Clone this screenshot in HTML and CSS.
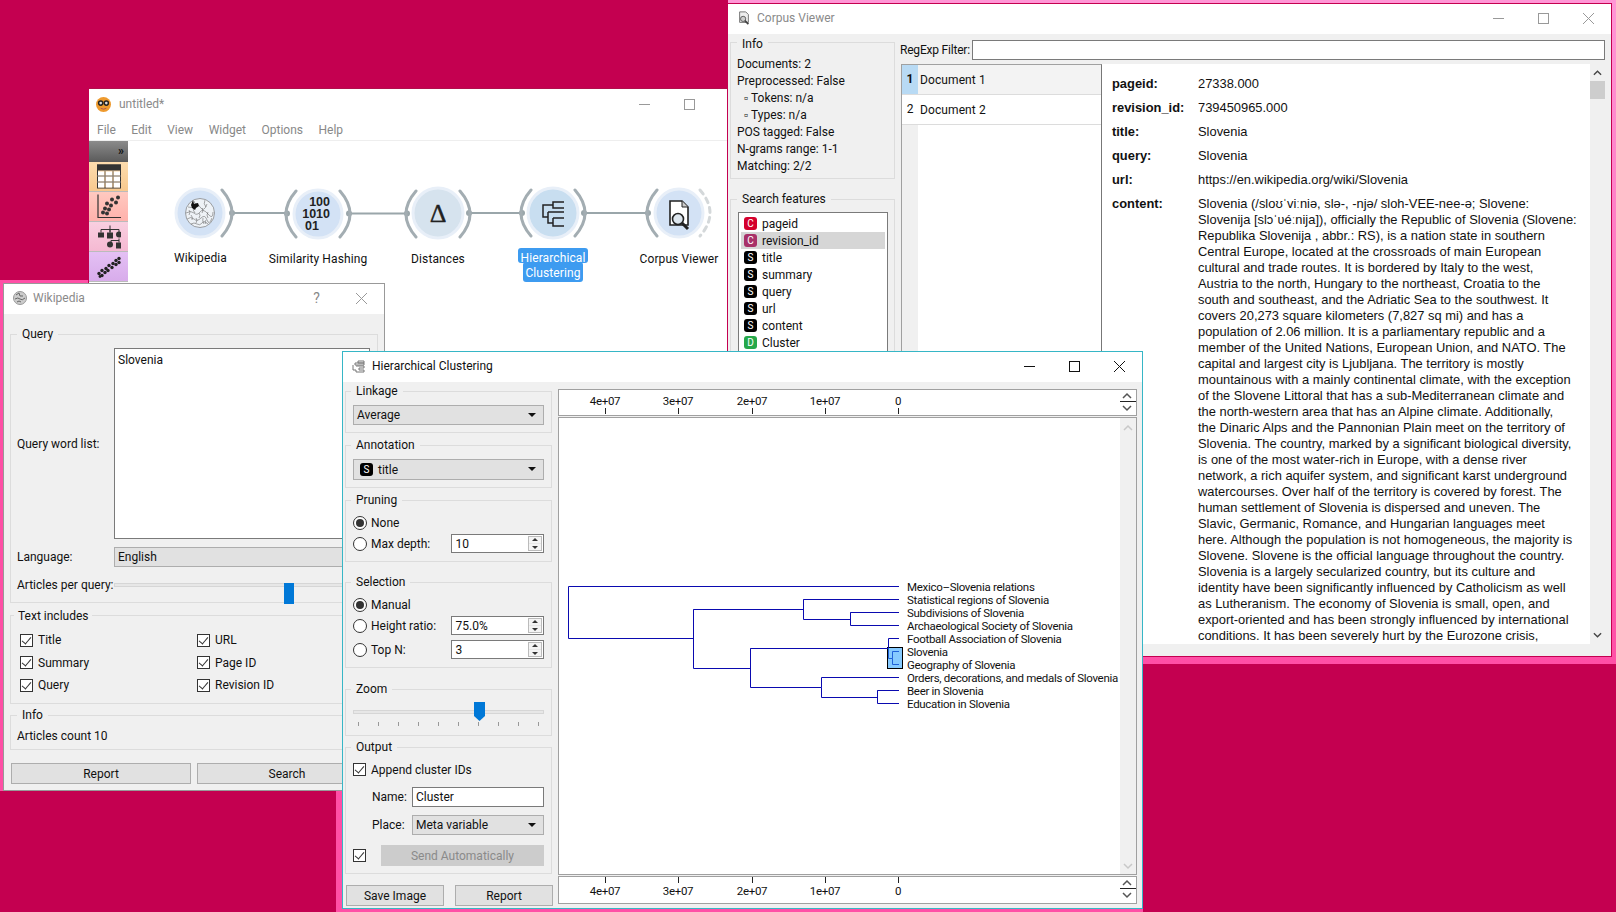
FILE: index.html
```html
<!DOCTYPE html>
<html lang="en">
<head>
    <meta charset="UTF-8">
    <title>Orange - Hierarchical Clustering</title>
    <link rel="stylesheet" href="styles.css">
</head>
<body>
<div id="desktop">
    <div class="glow glow-corpus"></div>
    <div class="glow glow-wiki"></div>
    <div class="glow glow-hc"></div>

    <!-- canvas window -->
    <div class="window win-canvas">
        <div class="titlebar inactive">
            <svg class="tb-logo" viewBox="0 0 16 16"><circle cx="8" cy="8" r="8" fill="#ee9a2e"/><circle cx="5" cy="6.5" r="3" fill="#222"/><circle cx="11" cy="6.5" r="3" fill="#222"/><circle cx="5" cy="6.5" r="1.4" fill="#ddd"/><circle cx="11" cy="6.5" r="1.4" fill="#ddd"/><path d="M5 12q3 2 6 0" stroke="#a55" fill="none"/></svg>
            <span class="title-text">untitled*</span>
            <div class="tb-controls">
                <span class="tb-btn"><svg viewBox="0 0 11 11"><path d="M0 5.5h11"/></svg></span>
                <span class="tb-btn"><svg viewBox="0 0 11 11"><rect x=".5" y=".5" width="10" height="10"/></svg></span>
                <span class="tb-btn"><svg viewBox="0 0 11 11"><path d="M0 0l11 11M11 0L0 11"/></svg></span>
            </div>
        </div>
        <div class="menubar"><span>File</span><span>Edit</span><span>View</span><span>Widget</span><span>Options</span><span>Help</span></div>
        <div class="canvas-body">
            <div class="dock">
                <div class="dock-head">»</div>
                <div class="tile tile-data">
                    <svg viewBox="0 0 24 24"><rect x="0" y="0" width="24" height="6" fill="#333"/><rect x=".5" y=".5" width="23" height="23" fill="none" stroke="#333"/><path d="M1 7h6v4H1zM9 7h6v4H9zM17 7h6v4h-6zM1 12h6v5H1zM9 12h6v5H9zM17 12h6v5h-6zM1 18h6v5H1zM9 18h6v5H9zM17 18h6v5h-6z" fill="#fff"/><path d="M0 11.500h24M0 17.500h24M8 6v18M16 6v18" stroke="#777" fill="none"/></svg>
                </div>
                <div class="tile tile-vis">
                    <svg viewBox="0 0 24 24"><path d="M1 0v23h23" fill="none" stroke="#333" stroke-width="1.2"/><g fill="#333"><circle cx="21" cy="3" r="2"/><circle cx="15" cy="5" r="2"/><circle cx="19" cy="8" r="2"/><circle cx="10" cy="9" r="2"/><circle cx="14" cy="11" r="2"/><circle cx="8" cy="14" r="2"/><circle cx="12" cy="15" r="2"/><circle cx="6" cy="18" r="2"/><circle cx="10" cy="19" r="2"/></g></svg>
                </div>
                <div class="tile tile-model">
                    <svg viewBox="0 0 24 24"><path d="M13 1v7M4 5h18M4 5v3M13 5v3M22 5v3M22 14v4M14 16h8M14 16v2" stroke="#333" fill="none"/><rect x="1" y="8" width="6" height="5" fill="#333"/><rect x="10" y="8" width="6" height="6" fill="#333"/><circle cx="22" cy="10" r="3" fill="#333"/><circle cx="13" cy="20" r="3" fill="#333"/><rect x="19" y="18" width="5" height="6" fill="#333"/></svg>
                </div>
                <div class="tile tile-unsup">
                    <svg viewBox="0 0 24 24"><g fill="#222"><circle cx="2" cy="19" r="1.7"/><circle cx="5" cy="21" r="1.7"/><circle cx="5" cy="16" r="1.7"/><circle cx="8" cy="18" r="1.7"/><circle cx="9" cy="14" r="1.7"/><circle cx="11" cy="16" r="1.7"/><circle cx="12" cy="11" r="1.7"/><circle cx="15" cy="13" r="1.7"/><circle cx="16" cy="9" r="1.7"/><circle cx="19" cy="10" r="1.7"/><circle cx="19" cy="6" r="1.7"/><circle cx="22" cy="4" r="1.7"/><circle cx="22" cy="8" r="1.7"/><circle cx="3" cy="22" r="1.4"/></g></svg>
                </div>
            </div>
            <svg class="scheme" viewBox="127 141 630 150">
                <path class="link" d="M231 213H286M348 213.5H406M468 213H521M583 213H647"/>
                <g class="anchors"><circle cx="231" cy="213" r="3"/><circle cx="286" cy="213.5" r="3"/><circle cx="348" cy="213.5" r="3"/><circle cx="406" cy="213.5" r="3"/><circle cx="468" cy="213" r="3"/><circle cx="521" cy="213" r="3"/><circle cx="583" cy="213" r="3"/><circle cx="647" cy="213" r="3"/></g>
                <path class="arc" d="M221 190Q241 213 221 236M295 191Q275 214 295 237M339 191Q359 214 339 237M415 191Q395 214 415 237M459 191Q479 214 459 237M530 190Q510 213 530 236M574 190Q594 213 574 236M656 190Q636 213 656 236"/>
                <path class="arc arc-dash" d="M699 190Q719 213 699 236"/>
                <circle class="node" cx="199" cy="213" r="24"/>
                <circle class="node" cx="317" cy="214" r="24"/>
                <circle class="node node-grey" cx="437" cy="213" r="25"/>
                <circle class="node node-sel" cx="552" cy="213" r="25"/>
                <circle class="node" cx="678" cy="213" r="24"/>

                <!-- wikipedia globe -->
                <circle cx="199" cy="213" r="14.5" fill="#eef2f6" stroke="#666" stroke-width=".6"/>
                <path d="M187 207q4 2 6-2t6 2 7-3M185 213q5-3 8 0t6-1 8 2 5-2M186 219q4-3 7 0t7-1 6 2 5-2M190 224q3-2 6 0t5-1 6 1M193 201q2 3 0 5M204 200q-2 4 1 7M193 207q-2 3 1 6M201 208q2 3 0 5M207 212q-2 3 0 6M195 218q2 2 0 5M202 218q-1 3 1 6M188 210q2 2 0 5M190 215q2 2 1 5M198 213q2 2 0 5M205 220q-2 2 0 4" fill="none" stroke="#555" stroke-width=".5"/>
                <path d="M190 205l2-5 1 4 4-1 1 3-3 2-1 2-3-2z" fill="#111"/>

                <!-- hashing -->
                <text class="bits" x="329" y="206" text-anchor="end">100</text>
                <text class="bits" x="329" y="218" text-anchor="end">1010</text>
                <text class="bits" x="318" y="230" text-anchor="end">01</text>

                <text class="delta" x="437" y="222" text-anchor="middle">Δ</text>

                <!-- clustering tree -->
                <path d="M563 202H552V208H563M552 205H542V217H547M547 212V223H552M547 212H563M552 218V226H563M552 218H563" fill="none" stroke="#222" stroke-width="1.5"/>

                <!-- corpus doc with lens -->
                <path d="M669 201h12l6 6v18h-18z" fill="#fff" stroke="#222" stroke-width="1.6"/>
                <path d="M681 201v6h6" fill="#ccc" stroke="#222"/>
                <circle cx="677" cy="219" r="5.5" fill="#dde6ee" stroke="#222" stroke-width="1.6"/>
                <path d="M681 223l6 6" stroke="#222" stroke-width="3"/>

                <text class="node-label" x="199.5" y="262" text-anchor="middle">Wikipedia</text>
                <text class="node-label" x="317" y="263" text-anchor="middle">Similarity Hashing</text>
                <text class="node-label" x="437" y="263" text-anchor="middle">Distances</text>
                <rect x="517" y="248" width="70" height="15" rx="3" fill="#3d9bf0"/>
                <rect x="522" y="262" width="60" height="20" rx="3" fill="#3d9bf0"/>
                <text class="node-label sel" x="552" y="262" text-anchor="middle">Hierarchical</text>
                <text class="node-label sel" x="552" y="277" text-anchor="middle">Clustering</text>
                <text class="node-label" x="678" y="263" text-anchor="middle">Corpus Viewer</text>
            </svg>
        </div>
    </div>

    <!-- corpus viewer -->
    <div class="window win-corpus">
        <div class="titlebar inactive">
            <svg class="tb-icon" viewBox="0 0 14 16"><path d="M2 1h7l3 3v9H2z" fill="#eee" stroke="#666"/><circle cx="6" cy="9" r="3" fill="#ccc" stroke="#555"/><path d="M8 11l4 4" stroke="#444" stroke-width="2"/></svg>
            <span class="title-text">Corpus Viewer</span>
            <div class="tb-controls">
                <span class="tb-btn"><svg viewBox="0 0 11 11"><path d="M0 5.5h11"/></svg></span>
                <span class="tb-btn"><svg viewBox="0 0 11 11"><rect x=".5" y=".5" width="10" height="10"/></svg></span>
                <span class="tb-btn"><svg viewBox="0 0 11 11"><path d="M0 0l11 11M11 0L0 11"/></svg></span>
            </div>
        </div>
        <div class="corpus-body">
            <div class="corpus-side">
                <div class="group corpus-info">
                    <div class="legend">Info</div>
                    <div class="info-lines">
                        <div>Documents: 2</div>
                        <div>Preprocessed: False</div>
                        <div class="indent">▫ Tokens: n/a</div>
                        <div class="indent">▫ Types: n/a</div>
                        <div>POS tagged: False</div>
                        <div>N-grams range: 1-1</div>
                        <div>Matching: 2/2</div>
                    </div>
                </div>
                <div class="group corpus-search">
                    <div class="legend">Search features</div>
                    <ul class="feature-list">
                        <li><span class="badge badge-c">C</span>pageid</li>
                        <li class="picked"><span class="badge badge-cm">C</span>revision_id</li>
                        <li><span class="badge">S</span>title</li>
                        <li><span class="badge">S</span>summary</li>
                        <li><span class="badge">S</span>query</li>
                        <li><span class="badge">S</span>url</li>
                        <li><span class="badge">S</span>content</li>
                        <li><span class="badge badge-d">D</span>Cluster</li>
                    </ul>
                </div>
            </div>
            <div class="corpus-main">
                <div class="filter-row">
                    <span class="filter-label">RegExp Filter:</span>
                    <div class="line-input filter-input"></div>
                </div>
                <div class="corpus-split">
                    <div class="doc-table">
                        <div class="doc-row current"><span class="doc-num">1</span><span class="doc-name">Document 1</span></div>
                        <div class="doc-row"><span class="doc-num">2</span><span class="doc-name">Document 2</span></div>
                        <div class="doc-rest"></div>
                    </div>
                    <div class="doc-view">
                        <div class="doc-text">
                            <b>pageid:</b><span>27338.000</span>
                            <b>revision_id:</b><span>739450965.000</span>
                            <b>title:</b><span>Slovenia</span>
                            <b>query:</b><span>Slovenia</span>
                            <b>url:</b><span>https://en.wikipedia.org/wiki/Slovenia</span>
                            <b>content:</b><span class="doc-content">Slovenia (/sloʊˈviːniə, slə-, -njə/ sloh-VEE-nee-ə; Slovene:
Slovenija [slɔˈʋéːnija]), officially the Republic of Slovenia (Slovene:
Republika Slovenija , abbr.: RS), is a nation state in southern
Central Europe, located at the crossroads of main European
cultural and trade routes. It is bordered by Italy to the west,
Austria to the north, Hungary to the northeast, Croatia to the
south and southeast, and the Adriatic Sea to the southwest. It
covers 20,273 square kilometers (7,827 sq mi) and has a
population of 2.06 million. It is a parliamentary republic and a
member of the United Nations, European Union, and NATO. The
capital and largest city is Ljubljana. The territory is mostly
mountainous with a mainly continental climate, with the exception
of the Slovene Littoral that has a sub-Mediterranean climate and
the north-western area that has an Alpine climate. Additionally,
the Dinaric Alps and the Pannonian Plain meet on the territory of
Slovenia. The country, marked by a significant biological diversity,
is one of the most water-rich in Europe, with a dense river
network, a rich aquifer system, and significant karst underground
watercourses. Over half of the territory is covered by forest. The
human settlement of Slovenia is dispersed and uneven. The
Slavic, Germanic, Romance, and Hungarian languages meet
here. Although the population is not homogeneous, the majority is
Slovene. Slovene is the official language throughout the country.
Slovenia is a largely secularized country, but its culture and
identity have been significantly influenced by Catholicism as well
as Lutheranism. The economy of Slovenia is small, open, and
export-oriented and has been strongly influenced by international
conditions. It has been severely hurt by the Eurozone crisis,</span>
                        </div>
                        <div class="scrollbar">
                            <svg class="chev" viewBox="0 0 10 6"><path d="M1 5l4-4 4 4"/></svg>
                            <div class="thumb"></div>
                            <svg class="chev chev-end" viewBox="0 0 10 6"><path d="M1 1l4 4 4-4"/></svg>
                        </div>
                    </div>
                </div>
            </div>
        </div>
    </div>

    <!-- wikipedia widget -->
    <div class="window win-wiki">
        <div class="titlebar inactive">
            <svg class="tb-icon" viewBox="0 0 14 14"><circle cx="7" cy="7" r="6.5" fill="#ccc" stroke="#999"/><path d="M3 4l3-2 1 3 3 0M2 8q3-2 5 0t5-1M4 11q2-2 4 0" fill="none" stroke="#666"/></svg>
            <span class="title-text">Wikipedia</span>
            <div class="tb-controls">
                <span class="tb-btn tb-help">?</span>
                <span class="tb-btn"><svg viewBox="0 0 11 11"><path d="M0 0l11 11M11 0L0 11"/></svg></span>
            </div>
        </div>
        <div class="wiki-body">
            <div class="group wiki-query">
                <div class="legend">Query</div>
                <div class="query-grid">
                    <label>Query word list:</label>
                    <div class="text-area">Slovenia</div>
                    <label>Language:</label>
                    <div class="combo combo-plain">English</div>
                    <label>Articles per query:</label>
                    <div class="slider"><div class="track"></div><div class="wiki-handle"></div></div>
                </div>
            </div>
            <div class="group wiki-includes">
                <div class="legend legend-flush">Text includes</div>
                <div class="check-grid">
                    <div class="check-row"><span class="check"></span>Title</div>
                    <div class="check-row"><span class="check"></span>URL</div>
                    <div class="check-row"><span class="check"></span>Summary</div>
                    <div class="check-row"><span class="check"></span>Page ID</div>
                    <div class="check-row"><span class="check"></span>Query</div>
                    <div class="check-row"><span class="check"></span>Revision ID</div>
                </div>
            </div>
            <div class="group wiki-info">
                <div class="legend">Info</div>
                <div class="info-count">Articles count 10</div>
            </div>
            <div class="button-row wiki-buttons">
                <div class="button">Report</div>
                <div class="button">Search</div>
            </div>
        </div>
    </div>

    <!-- hierarchical clustering widget -->
    <div class="window win-hc">
        <div class="titlebar">
            <svg class="tb-icon" viewBox="0 0 14 14"><path d="M6 2h6v2H6zM3 4h9v2H3zM1 6v5h3v2h8v-2H7V9h5V7H4" fill="none" stroke="#777"/></svg>
            <span class="title-text">Hierarchical Clustering</span>
            <div class="tb-controls">
                <span class="tb-btn"><svg viewBox="0 0 11 11"><path d="M0 5.5h11"/></svg></span>
                <span class="tb-btn"><svg viewBox="0 0 11 11"><rect x=".5" y=".5" width="10" height="10"/></svg></span>
                <span class="tb-btn"><svg viewBox="0 0 11 11"><path d="M0 0l11 11M11 0L0 11"/></svg></span>
            </div>
        </div>
        <div class="hc-body">
            <div class="hc-side">
                <div class="group g-linkage">
                    <div class="legend">Linkage</div>
                    <div class="combo">Average</div>
                </div>
                <div class="group g-annotation">
                    <div class="legend">Annotation</div>
                    <div class="combo combo-tall"><span class="badge">S</span>title</div>
                </div>
                <div class="group g-pruning">
                    <div class="legend">Pruning</div>
                    <div class="radio-row r-first"><span class="radio on"></span>None</div>
                    <div class="radio-row"><span class="radio"></span><span class="radio-label">Max depth:</span><div class="spin">10<span class="spin-btns"></span></div></div>
                </div>
                <div class="group g-selection">
                    <div class="legend">Selection</div>
                    <div class="radio-row r-first"><span class="radio on"></span>Manual</div>
                    <div class="radio-row"><span class="radio"></span><span class="radio-label">Height ratio:</span><div class="spin">75.0%<span class="spin-btns"></span></div></div>
                    <div class="radio-row r-next"><span class="radio"></span><span class="radio-label">Top N:</span><div class="spin">3<span class="spin-btns"></span></div></div>
                </div>
                <div class="group g-zoom">
                    <div class="legend">Zoom</div>
                    <div class="slider zoom-slider">
                        <div class="track"></div>
                        <svg class="zoom-handle" viewBox="0 0 11 19"><path d="M0 0h11v14l-5.5 5L0 14z"/></svg>
                    </div>
                    <div class="ticks"><i></i><i></i><i></i><i></i><i></i><i></i><i></i><i></i><i></i><i></i></div>
                </div>
                <div class="group g-output">
                    <div class="legend">Output</div>
                    <div class="check-row append-row"><span class="check"></span>Append cluster IDs</div>
                    <div class="form-row">
                        <label>Name:</label>
                        <div class="line-input">Cluster</div>
                    </div>
                    <div class="form-row">
                        <label>Place:</label>
                        <div class="combo">Meta variable</div>
                    </div>
                    <div class="send-row">
                        <span class="check"></span>
                        <div class="button disabled">Send Automatically</div>
                    </div>
                </div>
                <div class="button-row hc-buttons">
                    <div class="button">Save Image</div>
                    <div class="button">Report</div>
                </div>
            </div>
            <div class="hc-main">
                <svg class="axis" viewBox="559 390 577 25">
                    <g class="tick-text" text-anchor="middle"><text x="605" y="405">4e+07</text><text x="678" y="405">3e+07</text><text x="752" y="405">2e+07</text><text x="825" y="405">1e+07</text><text x="898" y="405">0</text></g>
                    <path class="tick" d="M605.500 408v6M678.500 408v6M752.500 408v6M825.500 408v6M898.500 408v6"/>
                    <path class="chev-line" d="M1123 398l4-4 4 4M1123 406l4 4 4-4"/>
                    <path class="tick" d="M1120 401.500h16"/>
                </svg>
                <svg class="plot" viewBox="559 418 577 456">
                    <rect x="1120" y="416" width="17" height="458" fill="#f0f0f0"/>
                    <path class="chev-dim" d="M1124 430l4-4 4 4M1124 864l4 4 4-4"/>
                    <rect x="887.500" y="647.500" width="15" height="21" fill="#86caff" stroke="#000"/>
                    <path class="tree" d="M899 586.500H568.500V638.500H693.500V609.500V668.500H750.500V648.500V687.500H821.500V677.500H899M693.500 609.500H803.500V599.500H899M803.500 599.500V619.500H850.500V612.500H899M850.500 612.500V625.500H899M750.500 648.500H888.500V638.500H899M821.500 687.500V697.500H877.500V690.500H899M877.500 690.500V703.500H899"/>
                    <path class="tree tree-sel" d="M888.500 648V658.500H892.500V651.500H899M892.500 658.500V664.500H899"/>
                    <g class="leaf">
                        <text x="907" y="591">Mexico–Slovenia relations</text>
                        <text x="907" y="604">Statistical regions of Slovenia</text>
                        <text x="907" y="617">Subdivisions of Slovenia</text>
                        <text x="907" y="630">Archaeological Society of Slovenia</text>
                        <text x="907" y="643">Football Association of Slovenia</text>
                        <text x="907" y="656">Slovenia</text>
                        <text x="907" y="669">Geography of Slovenia</text>
                        <text x="907" y="682">Orders, decorations, and medals of Slovenia</text>
                        <text x="907" y="695">Beer in Slovenia</text>
                        <text x="907" y="708">Education in Slovenia</text>
                    </g>
                </svg>
                <svg class="axis axis-bottom" viewBox="559 877 577 26">
                    <g class="tick-text" text-anchor="middle"><text x="605" y="895">4e+07</text><text x="678" y="895">3e+07</text><text x="752" y="895">2e+07</text><text x="825" y="895">1e+07</text><text x="898" y="895">0</text></g>
                    <path class="tick" d="M605.500 877v6M678.500 877v6M752.500 877v6M825.500 877v6M898.500 877v6"/>
                    <path class="chev-line" d="M1123 885l4-4 4 4M1123 893l4 4 4-4"/>
                    <path class="tick" d="M1120 888.500h16"/>
                </svg>
            </div>
        </div>
    </div>
</div>
</body>
</html>
```

FILE: styles.css
```css
* {
    box-sizing: border-box;
}

body {
    margin: 0;
    font-family: Roboto, "Noto Sans", sans-serif;
    font-size: 12px;
    color: #111;
}

#desktop {
    position: relative;
    width: 1616px;
    height: 912px;
    overflow: hidden;
    background-color: #c40050;
}

/* pink shadows that the windows leave on the desktop */
.glow {
    position: absolute;
    background-color: #ff4fa6;
}

.glow-corpus {
    left: 728px;
    top: 0;
    width: 888px;
    height: 664px;
    background: linear-gradient(#ff96d6, #ff4fa6);
}

.glow-wiki {
    left: 0;
    top: 280px;
    width: 100px;
    height: 511px;
}

.glow-hc {
    left: 336px;
    top: 700px;
    width: 807px;
    height: 212px;
}

/* windows sit free on the desktop */
.window {
    position: absolute;
    display: flex;
    flex-direction: column;
    background-color: #f0f0f0;
    border: 1px solid #999;
    overflow: hidden;
}

.win-canvas {
    left: 88px;
    top: 88px;
    width: 669px;
    height: 300px;
    background-color: #fff;
    border-color: #c40050;
    border-top-color: #b0104c;
    border-right: none;
}

.win-corpus {
    left: 727px;
    top: 3px;
    width: 885px;
    height: 654px;
    border-color: #c40050;
}

.win-wiki {
    left: 3px;
    top: 283px;
    width: 382px;
    height: 508px;
}

.win-hc {
    left: 342px;
    top: 351px;
    width: 801px;
    height: 558px;
    border-color: #36b6c6;
}

.titlebar {
    display: flex;
    align-items: center;
    height: 30px;
    flex: none;
    padding: 0 0 2px 9px;
    background-color: #fff;
}

.titlebar .title-text {
    margin-left: 6px;
}

.titlebar.inactive .title-text {
    color: #8a8a8a;
}

.win-canvas .titlebar {
    height: 29px;
    padding: 1px 0 0 7px;
}

.win-canvas .title-text {
    margin-left: 8px;
}

.tb-logo {
    width: 15px;
    height: 15px;
}

.tb-icon {
    width: 14px;
    height: 14px;
}

.tb-controls {
    display: flex;
    margin-left: auto;
}

.tb-btn {
    display: flex;
    align-items: center;
    justify-content: center;
    width: 45px;
    height: 28px;
    font-size: 14px;
}

.tb-btn svg {
    width: 11px;
    height: 11px;
    fill: none;
    stroke: #111;
}

.inactive .tb-btn svg {
    stroke: #999;
}

.tb-help {
    color: #888;
}

.menubar {
    display: flex;
    gap: 15.5px;
    height: 23px;
    padding: 5px 8px 0;
    flex: none;
    color: #888;
    border-bottom: 1px solid #eee;
}

.canvas-body {
    display: flex;
    flex: 1;
    min-height: 0;
}

.dock {
    width: 39px;
    flex: none;
}

.dock-head {
    height: 21px;
    padding-right: 4px;
    text-align: right;
    font-weight: bold;
    line-height: 20px;
    background: linear-gradient(#8b8b8b, #5a5a5a);
}

.tile {
    display: flex;
    align-items: center;
    justify-content: center;
    height: 30px;
    border-bottom: 1px solid #bbb;
}

.tile svg {
    width: 24px;
    height: 25px;
}

.tile-data {
    background: linear-gradient(#fcdcae, #f8c98e);
}

.tile-vis {
    background: linear-gradient(#ffc9c0, #ffb2ac);
}

.tile-model {
    background: linear-gradient(#f9cfe0, #f5b9d2);
}

.tile-unsup {
    background: linear-gradient(#e4c0f4, #d8aceb);
}

/* scheme */
.scheme {
    width: 630px;
    height: 150px;
    flex: none;
}

.link {
    fill: none;
    stroke: #9aa6aa;
    stroke-width: 2;
}

.anchors {
    fill: #9aa6aa;
}

.arc {
    fill: none;
    stroke: #a3adb2;
    stroke-width: 3;
    stroke-linecap: round;
}

.arc-dash {
    stroke: #d4d8da;
    stroke-dasharray: 5 5;
}

.node {
    fill: #d3e2f5;
    stroke: #e8eff8;
    stroke-width: 3;
}

.node-grey {
    fill: #d6e3ee;
}

.node-sel {
    fill: #c8def0;
}

.bits {
    font-family: "Liberation Sans", sans-serif;
    font-size: 12.5px;
    font-weight: bold;
    fill: #222;
}

.delta {
    font-family: "Liberation Serif", serif;
    font-size: 26px;
    fill: #222;
    stroke: #222;
    stroke-width: .3;
}

.node-label {
    font-family: Roboto, sans-serif;
    font-size: 12px;
    letter-spacing: .1px;
    fill: #111;
}

.node-label.sel {
    fill: #fff;
}

/* group boxes */
.group {
    border: 1px solid #dcdcdc;
    flex: none;
}

.legend {
    width: fit-content;
    height: 14px;
    margin: -8px 0 0 6px;
    padding: 0 5px;
    line-height: 14px;
    background-color: #f0f0f0;
}

.legend-flush {
    margin-left: 3px;
    padding: 0 4px 0 4px;
}

/* form controls */
.combo {
    position: relative;
    display: flex;
    align-items: center;
    height: 20px;
    padding-left: 3px;
    background-color: #e1e1e1;
    border: 1px solid #adadad;
}

.combo::after {
    content: "";
    position: absolute;
    right: 7px;
    top: 7px;
    border: 4px solid transparent;
    border-top: 4px solid #111;
    border-left-width: 4px;
}

.combo-plain::after {
    display: none;
}

.combo-tall {
    height: 21px;
    padding-left: 6px;
}

.badge {
    display: inline-flex;
    align-items: center;
    justify-content: center;
    width: 13px;
    height: 13px;
    margin-right: 5px;
    flex: none;
    border-radius: 3px;
    color: #fff;
    font-size: 10px;
    background-color: #000;
}

.badge-c {
    background-color: #d4002c;
}

.badge-cm {
    background-color: #a83068;
}

.badge-d {
    background-color: #26a84a;
}

.line-input {
    display: flex;
    align-items: center;
    height: 20px;
    padding-left: 3px;
    background-color: #fff;
    border: 1px solid #7a7a7a;
}

.text-area {
    padding: 4px 3px;
    background-color: #fff;
    border: 1px solid #7a7a7a;
}

.check {
    position: relative;
    display: inline-block;
    width: 13px;
    height: 13px;
    flex: none;
    background-color: #fff;
    border: 1px solid #333;
}

.check::after {
    content: "";
    position: absolute;
    left: 3px;
    top: 0;
    width: 4px;
    height: 8px;
    border: solid #333;
    border-width: 0 1px 1px 0;
    transform: rotate(40deg);
}

.check-row {
    display: flex;
    align-items: center;
    gap: 5px;
}

.radio {
    position: relative;
    display: inline-block;
    width: 14px;
    height: 14px;
    flex: none;
    background-color: #fff;
    border: 1px solid #333;
    border-radius: 50%;
}

.radio.on::after {
    content: "";
    position: absolute;
    left: 2px;
    top: 2px;
    width: 8px;
    height: 8px;
    border-radius: 50%;
    background-color: #333;
}

.radio-row {
    display: flex;
    align-items: center;
    height: 19px;
    margin-top: 2px;
}

.radio-row .radio {
    margin-right: 4px;
}

.radio-label {
    width: 80px;
}

.radio-row.r-first {
    height: 18px;
    margin-top: 7px;
}

.radio-row.r-next {
    margin-top: 5px;
}

.spin {
    position: relative;
    display: flex;
    align-items: center;
    width: 94px;
    height: 19px;
    padding-left: 4px;
    background-color: #fff;
    border: 1px solid #7a7a7a;
}

.spin-btns {
    position: absolute;
    right: 1px;
    top: 1px;
    width: 14px;
    height: 15px;
    background: linear-gradient(#e8e8e8, #e8e8e8) center / 100% 1px no-repeat, #f4f4f4;
    border: 1px solid #bbb;
}

.spin-btns::before,
.spin-btns::after {
    content: "";
    position: absolute;
    left: 3px;
    border: 3px solid transparent;
}

.spin-btns::before {
    top: -2px;
    border-bottom-color: #333;
}

.spin-btns::after {
    bottom: -2px;
    border-top-color: #333;
}

.slider {
    position: relative;
    display: flex;
    align-items: center;
}

.track {
    width: 100%;
    height: 4px;
    background-color: #e7e7e7;
    border: 1px solid #d6d6d6;
}

.button {
    display: flex;
    align-items: center;
    justify-content: center;
    height: 21px;
    background-color: #e1e1e1;
    border: 1px solid #adadad;
}

.button.disabled {
    color: #8a8a8a;
    background-color: #cccccc;
    border-color: #cccccc;
}

.button-row {
    display: flex;
}

/* wikipedia */
.wiki-body {
    display: flex;
    flex-direction: column;
    padding: 20px 6px 0 6px;
}

.wiki-query {
    height: 269px;
}

.query-grid {
    display: grid;
    grid-template-columns: 97px 1fr;
    grid-template-rows: 191px 19px 21px;
    row-gap: 8px;
    align-items: center;
    padding: 7px 7px 0 6px;
}

.query-grid .text-area {
    align-self: stretch;
}

.wiki-handle {
    position: absolute;
    left: 170px;
    top: 0;
    width: 10px;
    height: 21px;
    background-color: #0078d7;
}

.wiki-includes {
    height: 89px;
    margin-top: 12px;
}

.wiki-includes .legend {
    margin-top: -7px;
}

.check-grid {
    display: grid;
    grid-template-columns: 177px 1fr;
    grid-auto-rows: 22.6px;
    padding: 6px 0 0 9px;
}

.wiki-info {
    height: 35px;
    margin-top: 11px;
}

.info-count {
    padding: 7px 0 0 6px;
}

.wiki-buttons {
    gap: 6px;
    margin-top: 13px;
    padding-left: 1px;
}

.wiki-buttons .button {
    width: 180px;
}

/* hierarchical clustering */
.hc-body {
    display: flex;
    flex: 1;
    min-height: 0;
}

.hc-side {
    display: flex;
    flex-direction: column;
    width: 215px;
    padding: 9px 0 0 2px;
    flex: none;
}

.hc-side .group {
    width: 207px;
    padding: 0 7px;
    margin-top: 12px;
}

.hc-side .group:first-child {
    margin-top: 0;
}

.hc-side .legend {
    margin-left: -2px;
}

.g-linkage {
    height: 42px;
}

.g-linkage .combo,
.g-annotation .combo {
    margin-top: 7px;
}

.g-annotation {
    height: 43px;
}

.g-pruning {
    height: 62px;
}

.hc-side .g-selection {
    height: 86px;
    margin-top: 20px;
}

.hc-side .g-zoom {
    height: 47px;
    margin-top: 21px;
}

.zoom-slider {
    height: 19px;
    margin-top: 6px;
}

.zoom-handle {
    position: absolute;
    left: 121px;
    top: 0;
    width: 11px;
    height: 19px;
    fill: #0078d7;
}

.ticks {
    display: flex;
    justify-content: space-between;
    padding: 1px 5px 0 5px;
}

.ticks i {
    width: 1px;
    height: 4px;
    background-color: #999;
}

.hc-side .g-output {
    height: 127px;
    margin-top: 11px;
}

.append-row {
    margin-top: 6px;
    height: 19px;
}

.form-row {
    display: flex;
    align-items: center;
    margin-top: 8px;
    padding-left: 19px;
}

.form-row label {
    width: 40px;
    flex: none;
}

.form-row > div {
    width: 133px;
}

.send-row {
    display: flex;
    align-items: center;
    gap: 15px;
    margin-top: 10px;
}

.send-row .button {
    width: 163px;
}

.hc-buttons {
    gap: 11px;
    margin-top: 11px;
    padding-left: 1px;
}

.hc-buttons .button {
    width: 98px;
}

.hc-main {
    display: flex;
    flex-direction: column;
    gap: 1px;
    padding-top: 7px;
}

.axis,
.plot {
    display: block;
    width: 579px;
    background-color: #fff;
    border: 1px solid #a0a0a0;
    flex: none;
}

.axis {
    height: 27px;
}

.axis-bottom {
    height: 28px;
}

.plot {
    height: 458px;
}

.tick-text text,
.leaf text {
    font-size: 11.5px;
    letter-spacing: -.3px;
    fill: #111;
}

.tick {
    fill: none;
    stroke: #222;
}

.chev-line {
    fill: none;
    stroke: #555;
    stroke-width: 1.5;
}

.chev-dim {
    fill: none;
    stroke: #c8c8c8;
    stroke-width: 1.5;
}

.tree {
    fill: none;
    stroke: #0a0ab0;
}

.tree-sel {
    stroke: #1f62d8;
}

/* corpus viewer */
.corpus-body {
    display: flex;
    flex: 1;
    min-height: 0;
}

.corpus-side {
    width: 172px;
    padding: 8px 0 0 2px;
    flex: none;
}

.corpus-side .group {
    width: 165px;
}

.corpus-info {
    height: 137px;
}

.corpus-info .legend {
    margin-top: -6px;
}

.info-lines {
    padding: 5px 0 0 6px;
    line-height: 17px;
}

.info-lines .indent {
    padding-left: 7px;
}

.corpus-side .corpus-search {
    height: 420px;
    margin-top: 20px;
}

.feature-list {
    height: 300px;
    margin: 6px 6px 0 7px;
    padding: 2px;
    list-style: none;
    background-color: #fff;
    border: 1px solid #7a7a7a;
}

.feature-list li {
    display: flex;
    align-items: center;
    height: 17px;
    padding-left: 3px;
}

.feature-list .picked {
    background-color: #d6d6d6;
}

.corpus-main {
    display: flex;
    flex-direction: column;
    flex: 1;
    min-width: 0;
    padding: 6px 6px 0 0;
}

.filter-row {
    display: flex;
    align-items: center;
    justify-content: space-between;
    height: 20px;
}

.filter-label {
    white-space: nowrap;
    letter-spacing: -.2px;
}

.filter-input {
    width: 633px;
}

.corpus-split {
    display: flex;
    height: 581px;
    margin-top: 4px;
}

.doc-table {
    display: flex;
    flex-direction: column;
    width: 201px;
    flex: none;
    margin-left: 1px;
    background-color: #fff;
    border: 1px solid #a0a0a0;
    border-right-color: #777;
}

.doc-row {
    display: flex;
    align-items: center;
    height: 30px;
    border-bottom: 1px solid #dcdcdc;
}

.doc-num {
    width: 16px;
    height: 100%;
    line-height: 29px;
    text-align: center;
    background-color: #fff;
}

.doc-name {
    padding-left: 2px;
    letter-spacing: .1px;
}

.doc-row.current {
    background-color: #f3f3f3;
}

.doc-row.current .doc-num {
    font-weight: bold;
    background-color: #b8daf4;
}

.doc-rest {
    flex: 1;
    width: 16px;
    background-color: #f0f0f0;
}

.doc-view {
    display: flex;
    flex: 1;
    min-width: 0;
    height: 580px;
}

.doc-text {
    display: grid;
    grid-template-columns: 86px 1fr;
    grid-auto-rows: min-content;
    row-gap: 8px;
    flex: 1;
    padding: 12px 0 0 10px;
    overflow: hidden;
    font-family: "Liberation Sans", Arial, sans-serif;
    font-size: 12.9px;
    line-height: 16px;
    background-color: #fff;
}

.doc-content {
    white-space: pre;
}

.scrollbar {
    display: flex;
    flex-direction: column;
    align-items: center;
    width: 15px;
    flex: none;
    padding-top: 6px;
}

.chev {
    width: 9px;
    height: 6px;
    fill: none;
    stroke: #444;
    stroke-width: 1.5;
}

.thumb {
    width: 15px;
    height: 18px;
    margin-top: 5px;
    background-color: #cdcdcd;
}

.chev-end {
    margin-top: auto;
    margin-bottom: 6px;
}
```
